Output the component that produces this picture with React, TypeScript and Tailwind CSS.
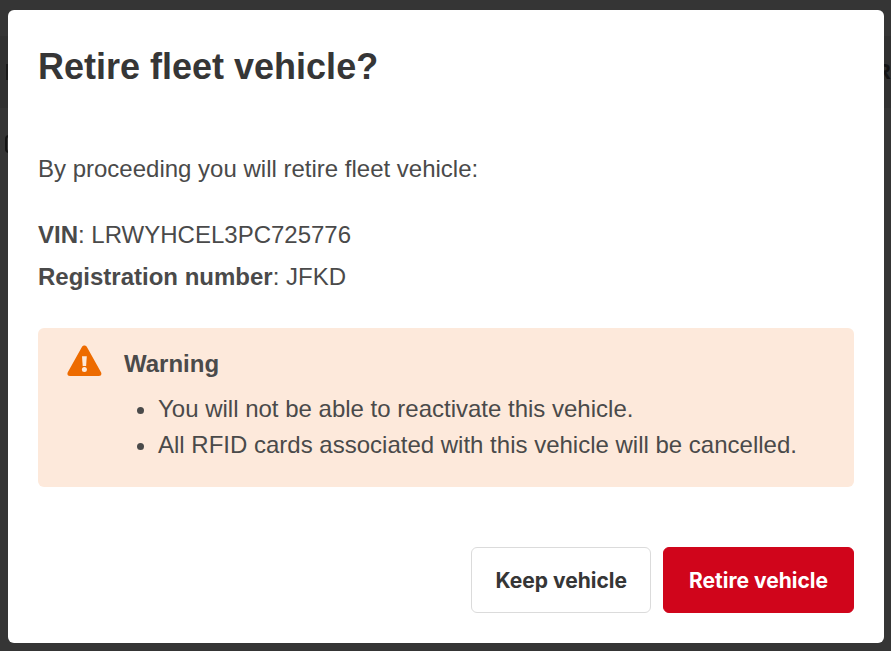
function WarningIcon() {
  return (
    <svg viewBox="0 0 36 32" className="h-8 w-9 shrink-0" aria-hidden="true">
      <path
        d="M15.9 1.9C17 -.1 19.8 -.1 20.9 1.9L35 27.3C36 29.2 34.9 31 32.9 31H3.9C1.9 31 .8 29.2 1.8 27.3Z"
        fill="#ed6b00"
      />
      <path d="M16 11.3H20.8L20.1 21H16.7Z" fill="#fde9db" />
      <circle cx="18.4" cy="24.6" r="2.5" fill="#fde9db" />
    </svg>
  );
}

function Backdrop() {
  return (
    <div className="absolute inset-0 overflow-hidden bg-[#353535] pt-9" aria-hidden="true">
      <div className="flex h-[72px] items-center justify-between bg-[#313131] text-[22px] font-bold text-[#141414]">
        <span className="ml-1.5 h-4 w-4 bg-[#1a1a1a]" />
        <span>R</span>
      </div>
      <div className="mt-[27px] ml-[5px] h-[18px] w-[18px] rounded-sm border-2 border-[#141414]" />
    </div>
  );
}

export default function App() {
  return (
    <div className="relative min-h-screen pt-[10px] pr-[7px] pb-2 pl-2 font-['Liberation_Sans',Arial,sans-serif] text-2xl text-[#4a4a4a]">
      <Backdrop />
      <div
        role="dialog"
        aria-modal="true"
        aria-labelledby="dialog-title"
        className="relative rounded-md bg-white px-[30px] pt-9 pb-[30px]"
      >
        <h1 id="dialog-title" className="text-4xl leading-[42px] font-bold text-[#363636]">
          Retire fleet vehicle?
        </h1>
        <p className="mt-[63px] leading-9">By proceeding you will retire fleet vehicle:</p>
        <div className="mt-[27px] leading-[42px]">
          <p>
            <strong>VIN</strong>: LRWYHCEL3PC725776
          </p>
          <p>
            <strong>Registration number</strong>: JFKD
          </p>
        </div>
        <section className="mt-[30px] flex gap-[22px] rounded-md bg-[#fde9db] px-7 pt-[17px] pb-6">
          <WarningIcon />
          <div>
            <h2 className="leading-[38px] font-bold">Warning</h2>
            <ul className="mt-2 list-disc pl-[34px] leading-9">
              <li>You will not be able to reactivate this vehicle.</li>
              <li>All RFID cards associated with this vehicle will be cancelled.</li>
            </ul>
          </div>
        </section>
        <div className="mt-[60px] flex justify-end gap-3 font-[Inter,sans-serif] text-[21px] leading-8 font-bold">
          <button
            type="button"
            className="rounded-md border border-[#dbdbdb] bg-white px-[23px] pt-[17px] pb-[15px] text-[#363636]"
          >
            Keep vehicle
          </button>
          <button
            type="button"
            className="rounded-md border border-[#d0051b] bg-[#d0051b] px-[25px] pt-[17px] pb-[15px] text-white"
          >
            Retire vehicle
          </button>
        </div>
      </div>
    </div>
  );
}
